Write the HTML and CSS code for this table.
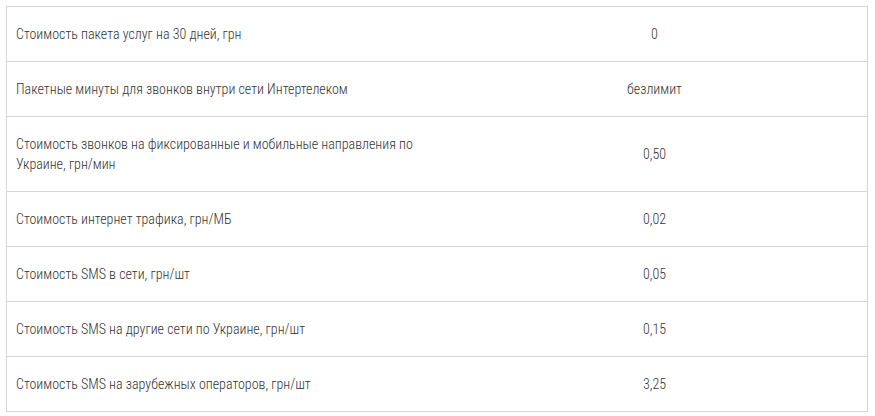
FILE: index.html
```html
<!DOCTYPE html>
<html lang="ru">
<head>
<meta charset="utf-8">
<title>Тариф</title>
<link rel="stylesheet" href="styles.css">
</head>
<body>
<table class="tariff">
  <tbody>
    <tr><td class="name">Стоимость пакета услуг на 30 дней, грн</td><td class="value">0</td></tr>
    <tr><td class="name">Пакетные минуты для звонков внутри сети Интертелеком</td><td class="value">безлимит</td></tr>
    <tr><td class="name">Стоимость звонков на фиксированные и мобильные направления по Украине, грн/мин</td><td class="value">0,50</td></tr>
    <tr><td class="name">Стоимость интернет трафика, грн/МБ</td><td class="value">0,02</td></tr>
    <tr><td class="name">Стоимость SMS в сети, грн/шт</td><td class="value">0,05</td></tr>
    <tr><td class="name">Стоимость SMS на другие сети по Украине, грн/шт</td><td class="value">0,15</td></tr>
    <tr><td class="name">Стоимость SMS на зарубежных операторов, грн/шт</td><td class="value">3,25</td></tr>
  </tbody>
</table>
</body>
</html>
```
FILE: styles.css
```css
html, body {
  margin: 0;
  padding: 0;
  background: #ffffff;
}
body {
  padding: 6px 7px 0 6px;
  font-family: "Roboto Condensed", "Roboto", sans-serif;
  font-size: 14px;
  font-weight: 300;
  line-height: 20px;
  color: #333333;
}
.tariff {
  width: 862px;
  border-collapse: collapse;
  table-layout: fixed;
}
.tariff td {
  border-top: 1px solid #d6d6d6;
  border-bottom: 1px solid #d6d6d6;
  padding: 17px 10px 17px 9px;
  vertical-align: middle;
}
.tariff td.name {
  width: 417px;
  border-left: 1px solid #d6d6d6;
  text-align: left;
}
.tariff td.value {
  border-right: 1px solid #d6d6d6;
  text-align: center;
}
```
